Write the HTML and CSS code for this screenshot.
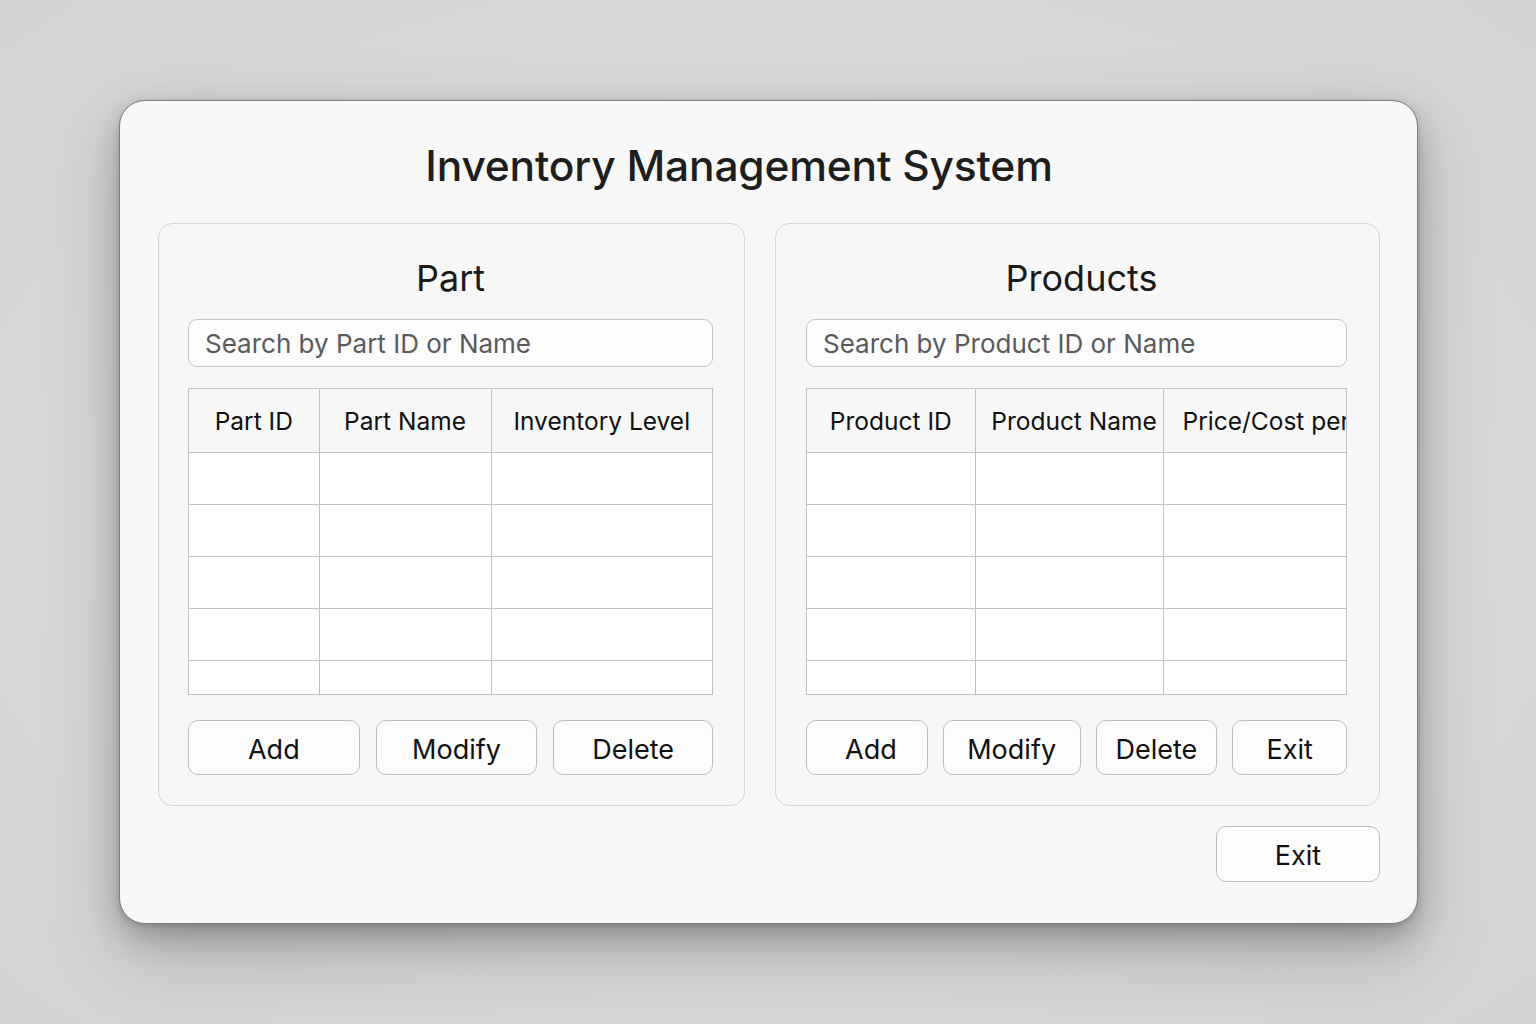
FILE: index.html
```html
<!DOCTYPE html>
<html lang="en">
<head>
<meta charset="utf-8">
<title>Inventory Management System</title>
<link rel="stylesheet" href="styles.css">
</head>
<body>
<div class="window">
  <h1 class="app-title">Inventory Management System</h1>
  <div class="panels">
    <section class="panel panel-parts">
      <h2 class="panel-title">Part</h2>
      <input class="search" type="text" placeholder="Search by Part ID or Name">
      <div class="table-wrap">
        <table class="grid">
          <colgroup><col class="c-pid"><col class="c-pname"><col class="c-inv"></colgroup>
          <thead><tr><th>Part ID</th><th>Part Name</th><th>Inventory Level</th></tr></thead>
          <tbody>
            <tr><td></td><td></td><td></td></tr>
            <tr><td></td><td></td><td></td></tr>
            <tr><td></td><td></td><td></td></tr>
            <tr><td></td><td></td><td></td></tr>
            <tr class="last"><td></td><td></td><td></td></tr>
          </tbody>
        </table>
      </div>
      <div class="actions actions-parts">
        <button class="btn">Add</button>
        <button class="btn">Modify</button>
        <button class="btn">Delete</button>
      </div>
    </section>
    <section class="panel panel-products">
      <h2 class="panel-title title-products">Products</h2>
      <input class="search" type="text" placeholder="Search by Product ID or Name">
      <div class="table-wrap">
        <table class="grid">
          <colgroup><col class="c-prid"><col class="c-prname"><col class="c-price"></colgroup>
          <thead><tr><th>Product ID</th><th class="th-pname">Product Name</th><th class="th-left">Price/Cost per Unit</th></tr></thead>
          <tbody>
            <tr><td></td><td></td><td></td></tr>
            <tr><td></td><td></td><td></td></tr>
            <tr><td></td><td></td><td></td></tr>
            <tr><td></td><td></td><td></td></tr>
            <tr class="last"><td></td><td></td><td></td></tr>
          </tbody>
        </table>
      </div>
      <div class="actions actions-products">
        <button class="btn btn-shift">Add</button>
        <button class="btn">Modify</button>
        <button class="btn">Delete</button>
        <button class="btn">Exit</button>
      </div>
    </section>
  </div>
  <div class="footer">
    <button class="btn btn-exit">Exit</button>
  </div>
</div>
</body>
</html>
```

FILE: styles.css
```css
* { box-sizing: border-box; }

html, body { margin: 0; padding: 0; }

body {
  width: 1536px;
  height: 1024px;
  overflow: hidden;
  background: radial-gradient(ellipse at 50% 50%, #e0e0e0 0%, #d8d8d8 60%, #d3d3d3 100%);
  font-family: Inter, "Noto Sans", "Liberation Sans", sans-serif;
  color: #1c1c1c;
  padding: 100px 0 0 119px;
}

.window {
  width: 1299px;
  height: 824px;
  background: #f8f8f8;
  border: 1px solid #7c7c7c;
  border-radius: 26px;
  box-shadow: 0 14px 30px rgba(0, 0, 0, 0.22), 0 30px 80px rgba(0, 0, 0, 0.18), 0 2px 6px rgba(0, 0, 0, 0.15);
  padding: 37px 37px 0 38px;
  display: flex;
  flex-direction: column;
}

.app-title {
  margin: 0 60px 29px 0;
  height: 56px;
  line-height: 56px;
  text-align: center;
  font-size: 42.5px;
  font-weight: 500;
  color: #1e1e1e;
  letter-spacing: -0.2px;
}

.panels {
  display: flex;
  gap: 30px;
}

.panel {
  height: 583px;
  border: 1px solid #d6d6d6;
  border-radius: 14px;
  background: #f7f7f7;
  padding: 30px 31px 0 29px;
  display: flex;
  flex-direction: column;
}

.panel-parts { width: 587px; }
.panel-products { width: 605px; padding-left: 30px; padding-right: 32px; }

.panel-title {
  margin: 0 0 17px 0;
  height: 48px;
  line-height: 48px;
  text-align: center;
  font-size: 36px;
  font-weight: 400;
  color: #1a1a1a;
}

.title-products { padding-left: 10px; }

.search {
  display: block;
  width: 100%;
  height: 48px;
  border: 1px solid #c4c4c4;
  border-radius: 9px;
  background: #fcfcfc;
  padding: 0 16px;
  font-family: inherit;
  font-size: 26px;
  color: #333;
  outline: none;
}

.search::placeholder { color: #5a5a5a; }

.table-wrap {
  margin-top: 21px;
  height: 307px;
  overflow: hidden;
  border: 1px solid #c2c2c2;
  background: #ffffff;
}

.grid {
  width: 100%;
  table-layout: fixed;
  border-collapse: collapse;
}

.c-pid { width: 130px; }
.c-pname { width: 172px; }
.c-prid { width: 168px; }
.c-prname { width: 188px; }

.grid th {
  height: 63px;
  background: #f7f7f7;
  font-weight: 400;
  font-size: 24.5px;
  color: #111;
  text-align: center;
  white-space: nowrap;
  overflow: hidden;
  padding: 1px 0 0 0;
  border-right: 1px solid #c2c2c2;
  border-bottom: 1px solid #c2c2c2;
}

.grid th.th-pname { padding-left: 10px; }

.grid th.th-left {
  text-align: left;
  padding-left: 19px;
}

.grid td {
  height: 52px;
  padding: 0;
  border-right: 1px solid #c2c2c2;
  border-bottom: 1px solid #c2c2c2;
}

.grid th:last-child, .grid td:last-child { border-right: none; }

.grid tr.last td { height: 40px; border-bottom: none; }

.actions {
  margin-top: 25px;
  display: grid;
  height: 55px;
}

.actions-parts {
  grid-template-columns: 171fr 161fr 159fr;
  column-gap: 16px;
}

.actions-products {
  grid-template-columns: 121fr 137fr 121fr 114fr;
  column-gap: 15px;
}

.btn {
  height: 55px;
  border: 1px solid #bdbdbd;
  border-radius: 10px;
  background: #fcfcfc;
  font-family: inherit;
  font-size: 27px;
  color: #111;
  padding: 3px 0 0 0;
}

.btn-shift { padding-left: 8px; }

.footer {
  margin-top: 20px;
  display: flex;
  justify-content: flex-end;
}

.btn-exit {
  width: 164px;
  height: 56px;
}
```
